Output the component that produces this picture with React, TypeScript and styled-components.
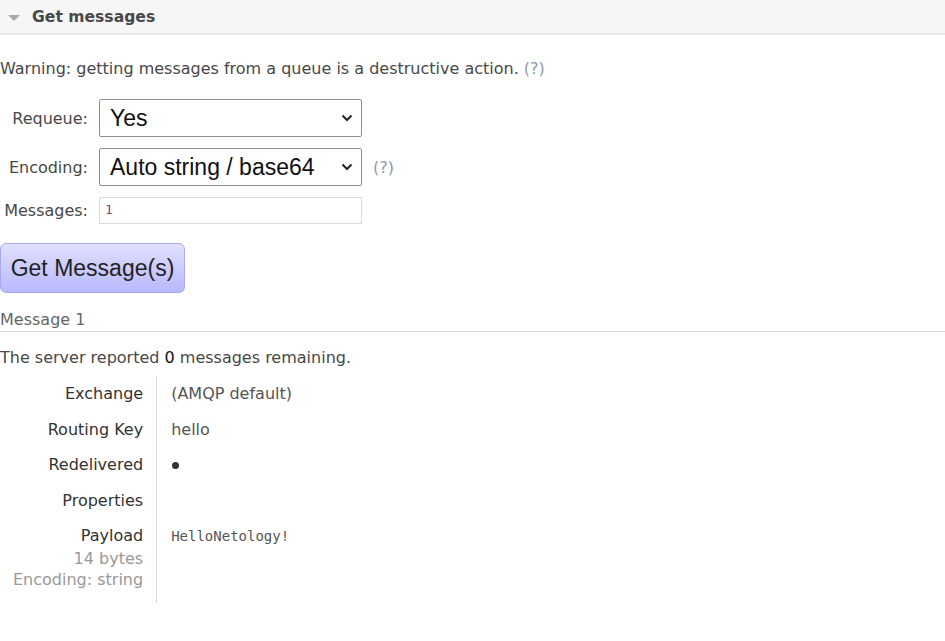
import React from "react";
import styled, { createGlobalStyle } from "styled-components";

const Global = createGlobalStyle`
  html, body { margin: 0; padding: 0; background: #fff; }
  body {
    font-family: "DejaVu Sans", Verdana, sans-serif;
    font-size: 16px;
    color: #484848;
  }
`;

const Page = styled.div`
  width: 945px;
`;

const SectionHeader = styled.div`
  display: flex;
  align-items: center;
  gap: 12px;
  height: 33px;
  padding-left: 8px;
  background: #f6f6f6;
  border-bottom: 2px solid #e8e8e8;
  font-weight: bold;
  font-size: 15.6px;
  color: #484848;
`;

const Triangle = styled.span`
  width: 0;
  height: 0;
  border-left: 6px solid transparent;
  border-right: 6px solid transparent;
  border-top: 6px solid #aaa;
  margin-top: 2px;
`;

const Body = styled.div`
  padding-top: 24px;
`;

const Warning = styled.p`
  margin: 0 0 20px 0;
  line-height: 20px;
`;

const Help = styled.span`
  color: #8d99ab;
`;

const Form = styled.div`
  display: grid;
  grid-template-columns: 88px 263px auto;
  column-gap: 11px;
  row-gap: 11px;
  align-items: center;
  justify-items: start;
`;

const Label = styled.label`
  justify-self: end;
  white-space: nowrap;
`;

const SelectWrap = styled.div`
  position: relative;
  width: 263px;
`;

const Select = styled.select`
  appearance: none;
  width: 100%;
  height: 38px;
  box-sizing: border-box;
  border: 1px solid #8f8f8f;
  border-radius: 2px;
  background: #fff;
  padding: 0 30px 0 10px;
  font-family: "Liberation Sans", Arial, sans-serif;
  font-size: 23px;
  color: #111;
`;

const Chevron = styled.svg`
  position: absolute;
  right: 9px;
  top: 15px;
  pointer-events: none;
`;

const Input = styled.input`
  width: 263px;
  height: 27px;
  box-sizing: border-box;
  border: 1px solid #dadada;
  padding: 0 5px 2px;
  font-family: "DejaVu Sans Mono", monospace;
  font-size: 13px;
  color: #7a4a7a;
`;

const Button = styled.button`
  margin-top: 19px;
  height: 50px;
  width: 185px;
  border: 1px solid #a9a9f0;
  border-radius: 6px;
  background: linear-gradient(#e0e0ff, #b8b8ff);
  font-family: "Liberation Sans", Arial, sans-serif;
  font-size: 23px;
  color: #222;
  padding: 0;
`;

const MessageTitle = styled.div`
  margin-top: 18px;
  padding-bottom: 2px;
  border-bottom: 1px solid #dddddd;
  color: #666;
  line-height: 18px;
`;

const Remaining = styled.p`
  margin: 16px 0 0 0;
  line-height: 20px;
`;

const Strong = styled.span`
  color: #111;
`;

const Table = styled.table`
  border-collapse: collapse;
  margin-top: 8px;
`;

const Th = styled.th<{ $extra?: number }>`
  text-align: right;
  font-weight: normal;
  vertical-align: top;
  padding: 6px 13px ${(p) => 6 + (p.$extra ?? 0)}px 13px;
  border-right: 1px solid #d8d8d8;
  color: #333;
  line-height: 23.5px;
  white-space: nowrap;
`;

const Td = styled.td`
  vertical-align: top;
  padding: 6px 14px;
  color: #555;
  line-height: 23.5px;
`;

const Sub = styled.div`
  color: #999;
  line-height: 21.5px;
`;

const Mono = styled.span`
  font-family: "DejaVu Sans Mono", monospace;
  font-size: 14px;
  color: #555;
`;

const Dot = styled.span`
  display: inline-block;
  width: 7px;
  height: 7px;
  margin-left: 1px;
  border-radius: 50%;
  background: #333;
  vertical-align: middle;
`;

const ChevronIcon = () => (
  <Chevron width="12" height="8" viewBox="0 0 12 8">
    <path d="M1.5 1.5 L6 6 L10.5 1.5" stroke="#222" strokeWidth="2" fill="none" />
  </Chevron>
);

export default function App() {
  return (
    <Page>
      <Global />
      <SectionHeader>
        <Triangle />
        Get messages
      </SectionHeader>
      <Body>
        <Warning>
          Warning: getting messages from a queue is a destructive action. <Help>(?)</Help>
        </Warning>
        <Form>
          <Label>Requeue:</Label>
          <SelectWrap>
            <Select defaultValue="yes">
              <option value="yes">Yes</option>
              <option value="no">No</option>
            </Select>
            <ChevronIcon />
          </SelectWrap>
          <span />
          <Label>Encoding:</Label>
          <SelectWrap>
            <Select defaultValue="auto">
              <option value="auto">Auto string / base64</option>
              <option value="base64">base64</option>
            </Select>
            <ChevronIcon />
          </SelectWrap>
          <Help>(?)</Help>
          <Label>Messages:</Label>
          <Input defaultValue="1" />
          <span />
        </Form>
        <Button>Get Message(s)</Button>
        <MessageTitle>Message 1</MessageTitle>
        <Remaining>
          The server reported <Strong>0</Strong> messages remaining.
        </Remaining>
        <Table>
          <tbody>
            <tr>
              <Th>Exchange</Th>
              <Td>(AMQP default)</Td>
            </tr>
            <tr>
              <Th>Routing Key</Th>
              <Td>hello</Td>
            </tr>
            <tr>
              <Th>Redelivered</Th>
              <Td><Dot /></Td>
            </tr>
            <tr>
              <Th>Properties</Th>
              <Td></Td>
            </tr>
            <tr>
              <Th $extra={6}>
                Payload
                <Sub>14 bytes</Sub>
                <Sub>Encoding: string</Sub>
              </Th>
              <Td><Mono>HelloNetology!</Mono></Td>
            </tr>
          </tbody>
        </Table>
      </Body>
    </Page>
  );
}
